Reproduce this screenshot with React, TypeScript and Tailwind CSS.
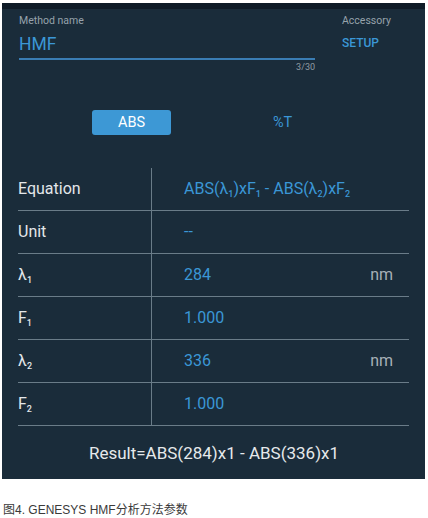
import React from "react";

const Sub = ({ children }: { children: React.ReactNode }) => (
  <span className="relative top-[3px] text-[9px] font-medium">{children}</span>
);

const rows: { label: React.ReactNode; value: React.ReactNode; unit?: string }[] = [
  {
    label: "Equation",
    value: (
      <span>
        ABS(λ<Sub>1</Sub>)xF<Sub>1</Sub> - ABS(λ<Sub>2</Sub>)xF<Sub>2</Sub>
      </span>
    ),
  },
  { label: "Unit", value: "--" },
  { label: <span>λ<Sub>1</Sub></span>, value: "284", unit: "nm" },
  { label: <span>F<Sub>1</Sub></span>, value: "1.000" },
  { label: <span>λ<Sub>2</Sub></span>, value: "336", unit: "nm" },
  { label: <span>F<Sub>2</Sub></span>, value: "1.000" },
];

export default function App() {
  return (
    <div className="w-[428px] h-[518px] bg-white" style={{ fontFamily: "Roboto, 'Noto Sans', sans-serif" }}>
      <div className="pt-[3px] pl-[2px] pr-[3px]">
        <div className="h-[6px] bg-[#0f1b27]" />
        <div className="h-[470px] bg-[#1a2c3a] flex flex-col">
          {/* header */}
          <div className="flex pl-[17px] pt-[5px]">
            <div className="w-[296px] flex flex-col">
              <div className="text-[10.5px] leading-[14px] text-[#97a3ac]">Method name</div>
              <div className="mt-[5px] text-[17.5px] leading-[22px] text-[#3b97d6]">HMF</div>
              <div className="mt-[3px] h-[2px] bg-[#3a7db4]" />
              <div className="text-right text-[9px] leading-[12px] mt-[1px] text-[#8f9ba4]">3/30</div>
            </div>
            <div className="ml-[27px] flex flex-col">
              <div className="text-[10.5px] leading-[14px] text-[#97a3ac]">Accessory</div>
              <div className="mt-[7px] text-[12px] leading-[16px] font-medium text-[#3b97d6]">SETUP</div>
            </div>
          </div>
          {/* toggle */}
          <div className="mt-[37px] flex items-center">
            <div className="ml-[90px] w-[79px] h-[25px] rounded-[3px] bg-[#3d98d5] flex items-center justify-center text-[14.5px] text-white">
              ABS
            </div>
            <div className="ml-[102px] text-[14.5px] text-[#3b97d6]">%T</div>
          </div>
          {/* table */}
          <div className="mt-[33px] ml-[16px] w-[391px] flex flex-col">
            {rows.map((r, i) => (
              <div key={i} className="flex h-[43px] border-b border-[#6a7c88]">
                <div className="w-[134px] border-r border-[#6a7c88] flex items-center text-[16px] text-[#e3e7ea]">
                  {r.label}
                </div>
                <div className="flex-1 flex items-center pl-[32px] pr-[16px] text-[16px] text-[#3b97d6]">
                  <span className="flex-1">{r.value}</span>
                  {r.unit && <span className="text-[#a7b0b7]">{r.unit}</span>}
                </div>
              </div>
            ))}
          </div>
          <div className="mt-[15px] text-center text-[17px] text-[#e6e9eb] pl-[1px]">
            Result=ABS(284)x1 - ABS(336)x1
          </div>
        </div>
        <div
          className="mt-[22px] ml-[1px] text-[12px] text-[#3a3a3a]"
          style={{ fontFamily: "'Liberation Sans', 'Noto Sans CJK SC', sans-serif" }}
        >
          图4. GENESYS HMF分析方法参数
        </div>
      </div>
    </div>
  );
}
